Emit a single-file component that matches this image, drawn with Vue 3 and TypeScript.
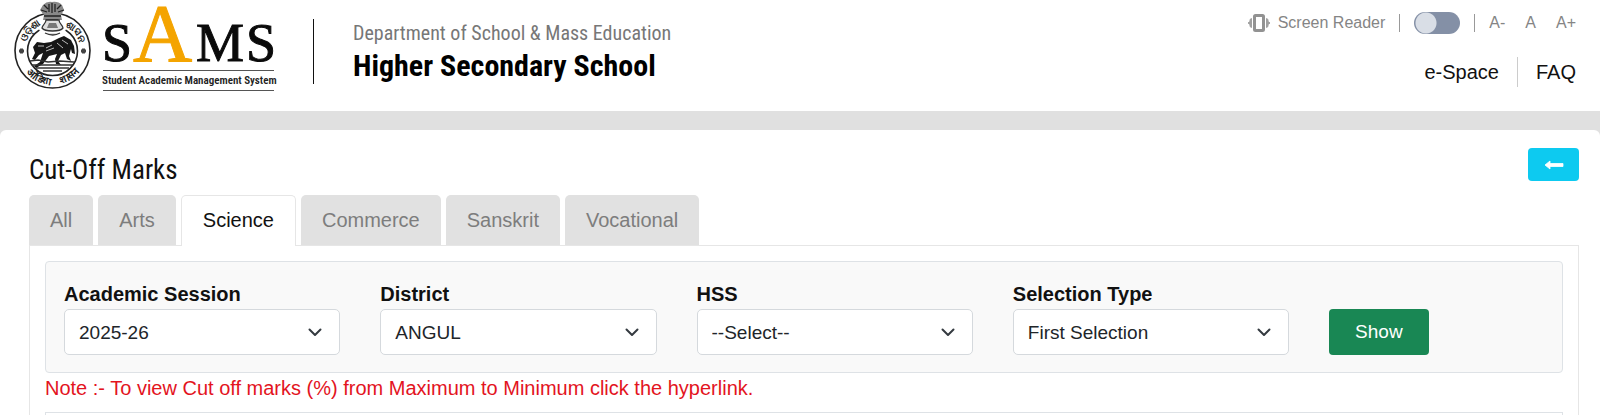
<script setup lang="ts">
import { ref } from 'vue'

interface Field {
  id: string
  label: string
  options: string[]
}

const tabs: string[] = ['All', 'Arts', 'Science', 'Commerce', 'Sanskrit', 'Vocational']
const activeTab = ref('Science')
const darkMode = ref(false)

const fields: Field[] = [
  { id: 'session', label: 'Academic Session', options: ['2025-26', '2024-25'] },
  { id: 'district', label: 'District', options: ['ANGUL', 'BALANGIR'] },
  { id: 'hss', label: 'HSS', options: ['--Select--'] },
  { id: 'selection', label: 'Selection Type', options: ['First Selection', 'Second Selection'] },
]
const values = ref<Record<string, string>>(
  Object.fromEntries(fields.map((f) => [f.id, f.options[0]])),
)
</script>

<template>
  <div class="page">
    <header class="header">
      <div class="brand">
        <svg class="emblem" viewBox="0 0 80 90" aria-label="State emblem">
          <defs>
            <path id="arc-top" d="M11.500 51a28 28 0 0 1 56 0" />
            <path id="arc-bottom" d="M5.500 51a34 34 0 0 0 68 0" />
          </defs>
          <ellipse cx="39.500" cy="50.500" rx="37.500" ry="37.500" fill="#fff" stroke="#222" stroke-width="1.600" />
          <ellipse cx="39.500" cy="51" rx="25" ry="24.500" fill="#fff" stroke="#222" stroke-width="1.600" />
          <g fill="#1c1c1c" font-size="10" font-weight="700">
            <text><textPath href="#arc-top" startOffset="9">ଓଡ଼ିଶା</textPath></text>
            <text><textPath href="#arc-top" startOffset="57">ଶାସନ</textPath></text>
            <text><textPath href="#arc-bottom" startOffset="24">ओडिशा</textPath></text>
            <text><textPath href="#arc-bottom" startOffset="62">शासन</textPath></text>
          </g>
          <path d="M29 21h21l3 9-6 4H32l-6-4z" fill="#fff" />
          <path d="M30 5q4-4 9-3q6-1 10 3l2 5-3 5 1 5H30l1-5-4-5z" fill="#888" />
          <path d="M31 5l4 4m-7 1 6 2m14-7-4 4m7 1-6 2M36 4v8m3-9v10m3-9v8M31 16h17M33 20h12" stroke="#222" stroke-width="1.300" fill="none" />
          <path d="M33 20c0 4-4 5-4 8 3 4 18 4 21 0 0-3-4-4-4-8zM32 33q8 4 15 0" fill="#ddd" stroke="#333" stroke-width="1.300" />
          <path d="M36 23h7l2 5H34z" fill="#777" />
          <path d="M20 47l4-5 7 1 7-1 8-4 5-2 7 4 3 6 1 8-3-1-1-4-2 7 2 5-4-2-2-6-4 2-3 6 3 4-5-1-1-5 2-5-8 2-6 8-7 4-2-2 6-4 3-9-4 2-4 5-3-1 3-6z" fill="#161616" />
          <path d="M25 46h6m2 2 6-3m5-2 6 5m-1-8 6 4m-22 7 8-3" stroke="#bbb" stroke-width="1" />
          <path d="M17 61l8-1 10 2 12-1 14 1M19 65h41M23 68h33M30 71h19" stroke="#333" stroke-width="1.400" fill="none" />
          <path d="M6 51h5m-2.500-2.500v5M68 51h5m-2.500-2.500v5" stroke="#444" stroke-width="3" />
        </svg>
        <svg class="wordmark" viewBox="0 0 174 94" aria-label="SAMS Student Academic Management System">
          <g class="sams">
            <text x="0" y="61" font-size="54">S</text>
            <text x="31" y="61" font-size="82" class="accent">A</text>
            <text x="94" y="61" font-size="54">M</text>
            <text x="144" y="61" font-size="54">S</text>
          </g>
          <path d="M1 70.500h171M1 90.500h171" stroke="#555" />
          <text x="0" y="84" class="tagline">Student Academic Management System</text>
        </svg>
        <div class="titles">
          <p class="department">Department of School &amp; Mass Education</p>
          <h1>Higher Secondary School</h1>
        </div>
      </div>
      <div class="tools">
        <div class="access">
          <a href="#" class="reader">
            <svg width="24" height="18" viewBox="0 0 24 18" aria-hidden="true">
              <rect x="7.500" y="1.500" width="9" height="15" rx="1" fill="#fff" stroke="#929292" stroke-width="3" />
              <path d="M4.500 4.500v9l-1.500-1v-2l-2-1.500 2-1.500v-2zM19.500 4.500v9l1.500-1v-2l2-1.500-2-1.500v-2z" fill="#a0a0a0" stroke="#a0a0a0" />
            </svg>
            Screen Reader
          </a>
          <span class="bar"></span>
          <input v-model="darkMode" type="checkbox" class="switch" aria-label="Dark mode" />
          <span class="bar"></span>
          <div class="sizes">
            <button type="button">A-</button>
            <button type="button">A</button>
            <button type="button">A+</button>
          </div>
        </div>
        <nav class="links">
          <a href="#">e-Space</a>
          <a href="#">FAQ</a>
        </nav>
      </div>
    </header>

    <main class="content">
      <div class="heading">
        <h2>Cut-Off Marks</h2>
        <button type="button" class="back" aria-label="Back">
          <svg width="20" height="12" viewBox="0 0 20 12" aria-hidden="true">
            <path d="M6 2v2.500h13v3H6V10L1 6z" fill="#fff" stroke="#fff" stroke-linejoin="round" stroke-width=".8" />
          </svg>
        </button>
      </div>
      <div class="tabs" role="tablist">
        <button
          v-for="tab in tabs"
          :key="tab"
          type="button"
          role="tab"
          :class="{ active: tab === activeTab }"
          :aria-selected="tab === activeTab"
          @click="activeTab = tab"
        >{{ tab }}</button>
      </div>
      <section class="panel">
        <form class="filters" @submit.prevent>
          <div v-for="f in fields" :key="f.id" class="field">
            <label :for="f.id">{{ f.label }}</label>
            <div class="select">
              <select :id="f.id" v-model="values[f.id]">
                <option v-for="o in f.options" :key="o">{{ o }}</option>
              </select>
              <svg width="16" height="16" viewBox="0 0 16 16" aria-hidden="true">
                <path d="m2.500 5.500 5.500 5.500 5.500-5.500" fill="none" stroke="#343a40" stroke-width="2" stroke-linecap="round" stroke-linejoin="round" />
              </svg>
            </div>
          </div>
          <button type="submit" class="show">Show</button>
        </form>
        <p class="note">Note :- To view Cut off marks (%) from Maximum to Minimum click the hyperlink.</p>
        <div class="results"></div>
      </section>
    </main>
  </div>
</template>

<style>
body {
  margin: 0;
  overflow: hidden;
}
</style>

<style scoped>
.page {
  background: #e0e0e0;
  color: #111;
  font-family: "Liberation Sans", Arial, sans-serif;
  font-size: 20px;
}
.page * {
  box-sizing: border-box;
}
button,
select {
  font: inherit;
}
a {
  color: inherit;
  text-decoration: none;
}
h1,
h2,
p {
  margin: 0;
}
h1,
h2,
.department,
.tagline {
  font-family: "Liberation Sans Narrow", "Roboto Condensed", "Open Sans Condensed", "DejaVu Sans Condensed", sans-serif;
}
.header {
  display: flex;
  justify-content: space-between;
  height: 111px;
  padding: 0 24px 0 13px;
  background: #fff;
}
.brand {
  display: flex;
  align-items: flex-start;
}
.emblem {
  width: 80px;
  height: 90px;
}
.wordmark {
  width: 174px;
  height: 94px;
  margin-left: 9px;
  overflow: visible;
}
.sams {
  font-family: "Liberation Serif", serif;
  fill: #0a0a0a;
  stroke: #0a0a0a;
  stroke-width: 1;
}
.accent {
  fill: #f4a400;
  stroke: #f4a400;
}
.tagline {
  font-size: 11px;
  font-weight: 600;
  fill: #222;
}
.titles {
  height: 65px;
  margin: 19px 0 0 37px;
  padding-left: 39px;
  border-left: 1px solid #111;
}
.department {
  color: #777;
  font-size: 20px;
  line-height: 28px;
}
h1 {
  color: #000;
  font-size: 30px;
  line-height: 38px;
}
.tools {
  display: flex;
  flex-direction: column;
  align-items: flex-end;
  gap: 22px;
  padding-top: 11px;
}
.access {
  display: flex;
  align-items: center;
  height: 24px;
  color: #858585;
  font-size: 16px;
}
.reader {
  display: flex;
  align-items: center;
  gap: 7px;
}
.bar {
  width: 1px;
  height: 18px;
  margin: 0 14px;
  background: #999;
}
.switch {
  width: 46px;
  height: 22px;
  margin: 0;
  border-radius: 11px;
  appearance: none;
  background: radial-gradient(circle at 12px 11px, #d9dee6 10px, #8490a6 11px);
}
.switch:checked {
  background: radial-gradient(circle at 34px 11px, #d9dee6 10px, #8490a6 11px);
}
.sizes {
  display: flex;
  gap: 20px;
}
.sizes button {
  padding: 0;
  border: 0;
  background: none;
  color: inherit;
}
.links {
  display: flex;
}
.links a {
  line-height: 30px;
}
.links a + a {
  margin-left: 18px;
  padding-left: 18px;
  border-left: 1px solid #ccc;
}
.content {
  margin-top: 19px;
  padding: 18px 21px 0 29px;
  border-radius: 6px 6px 0 0;
  background: #fff;
}
.heading {
  display: flex;
  justify-content: space-between;
  height: 47px;
}
h2 {
  font-size: 27px;
  font-weight: 400;
  line-height: 44px;
}
.back {
  display: flex;
  align-items: center;
  justify-content: center;
  width: 51px;
  height: 33px;
  padding: 0;
  border: 0;
  border-radius: 4px;
  background: #0dcaf0;
}
.tabs {
  display: flex;
  gap: 5px;
}
.tabs button {
  height: 50px;
  padding: 0 21px;
  border: 0;
  border-radius: 5px 5px 0 0;
  background: #e1e1e1;
  color: #7d7d7d;
}
.tabs .active {
  z-index: 1;
  height: 51px;
  margin-bottom: -1px;
  padding-bottom: 2px;
  border: 1px solid #e6e6e6;
  border-bottom: 0;
  background: #fff;
  color: #111;
}
.panel {
  padding: 15px 15px 0;
  border: 1px solid #e6e6e6;
  border-bottom: 0;
}
.filters {
  display: grid;
  grid-template-columns: repeat(4, 9fr) 7fr;
  align-items: end;
  gap: 40px;
  padding: 20px 18px 17px;
  border: 1px solid #dee2e6;
  border-radius: 4px;
  background: #f9f9f9;
}
label {
  display: block;
  margin-bottom: 2px;
  font-weight: 700;
  line-height: 25px;
}
.select {
  display: grid;
  align-items: center;
}
.select > * {
  grid-area: 1 / 1;
}
.select svg {
  justify-self: end;
  margin-right: 17px;
  pointer-events: none;
}
select {
  width: 100%;
  height: 46px;
  padding: 0 14px;
  border: 1px solid #d5d9dd;
  border-radius: 5px;
  appearance: none;
  background: #fff;
  color: #212529;
  font-size: 19px;
}
.show {
  justify-self: start;
  height: 46px;
  padding: 0 26px;
  border: 0;
  border-radius: 4px;
  background: #198754;
  color: #fff;
  font-size: 19px;
}
.note {
  color: #e3141e;
  line-height: 30px;
}
.results {
  height: 20px;
  margin-top: 9px;
  border: 1px solid #dee2e6;
  border-bottom: 0;
}
</style>
